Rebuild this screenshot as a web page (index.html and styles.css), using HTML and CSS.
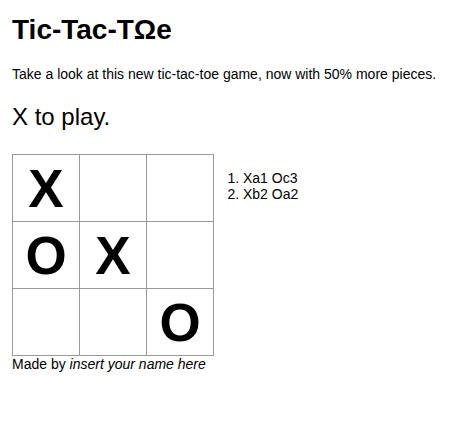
FILE: index.html
```html
<!DOCTYPE html>
<html lang="en">
<head>
<meta charset="utf-8">
<title>Tic-Tac-TΩe</title>
<link rel="stylesheet" href="styles.css">
</head>
<body>
<h1 class="title">Tic-Tac-TΩe</h1>
<p class="intro">Take a look at this new tic-tac-toe game, now with 50% more pieces.</p>
<h2 class="status">X to play.</h2>
<div class="game">
  <table class="board">
    <tr><td class="cell">X</td><td class="cell"></td><td class="cell"></td></tr>
    <tr><td class="cell">O</td><td class="cell">X</td><td class="cell"></td></tr>
    <tr><td class="cell"></td><td class="cell"></td><td class="cell">O</td></tr>
  </table>
  <ol class="moves">
    <li>Xa1 Oc3</li>
    <li>Xb2 Oa2</li>
  </ol>
</div>
<div class="footer">Made by <em>insert your name here</em></div>
</body>
</html>
```
FILE: styles.css
```css
body {
  margin: 0;
  padding: 14px 12px;
  font-family: "Liberation Sans", Arial, sans-serif;
  font-size: 14px;
  color: #000;
  background: #fff;
}
.title {
  margin: 0;
  font-size: 28px;
  font-weight: bold;
}
.intro {
  margin: 20px 0 0;
  font-size: 14px;
}
.status {
  margin: 21px 0 0;
  font-size: 24px;
  font-weight: normal;
}
.game {
  display: flex;
  align-items: flex-start;
  margin-top: 23px;
}
.board {
  border-collapse: collapse;
}
.cell {
  width: 66px;
  height: 66px;
  padding: 0;
  border: 1px solid #999;
  text-align: center;
  vertical-align: middle;
  font-size: 53px;
  font-weight: bold;
}
.moves {
  margin: 16px 0 0;
  padding-left: 29px;
  font-size: 14px;
}
.footer {
  font-size: 14px;
}
```
